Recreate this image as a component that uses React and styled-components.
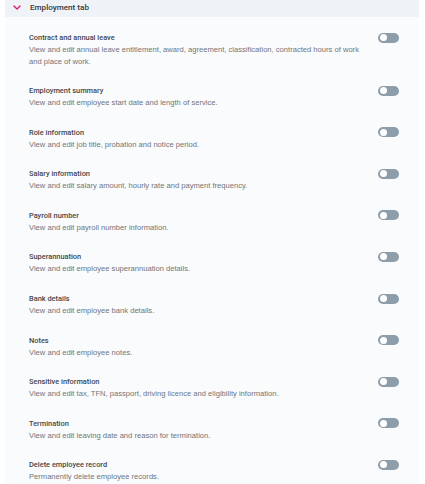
import React from 'react';
import styled, { createGlobalStyle } from 'styled-components';

const GlobalStyle = createGlobalStyle`
  html, body {
    margin: 0;
    padding: 0;
    background: #ffffff;
  }
  body {
    font-family: "Liberation Sans", Arial, sans-serif;
  }
`;

const Panel = styled.div`
  margin: 0 6px 0 5px;
  min-height: 484px;
  background: #f9fbfd;
`;

const TabHeader = styled.div`
  display: flex;
  align-items: center;
  height: 17px;
  padding-left: 8px;
  background: #eff2f6;
  box-sizing: border-box;
  padding-bottom: 3px;
`;

const Chevron = styled.svg`
  width: 8px;
  height: 5px;
  margin-right: 9px;
`;

const TabTitle = styled.span`
  font-family: Roboto, "Liberation Sans", sans-serif;
  font-size: 8.1px;
  font-weight: 500;
  color: #34383e;
`;

const List = styled.div`
  display: flex;
  flex-direction: column;
  padding: 15px 0 0 24px;
`;

const Row = styled.div`
  display: flex;
  align-items: flex-start;
  justify-content: space-between;
  padding-right: 20px;
  margin-bottom: 18.1px;
`;

const Text = styled.div`
  display: flex;
  flex-direction: column;
  max-width: 338px;
`;

const Title = styled.div`
  font-family: Roboto, "Liberation Sans", sans-serif;
  font-size: 7.4px;
  font-weight: 500;
  color: #43464b;
  line-height: 11px;
`;

const Desc = styled.div`
  font-size: 7.6px;
  color: #717479;
  line-height: 11.5px;
  margin-top: 1px;
`;

const Toggle = styled.div`
  flex: none;
  width: 21px;
  height: 10px;
  border-radius: 5px;
  background: ${p => (p.on ? '#d6246e' : '#8d9daa')};
  position: relative;
  margin-top: 0.5px;

  &::after {
    content: '';
    position: absolute;
    top: 1.5px;
    left: ${p => (p.on ? '12px' : '1.5px')};
    width: 7px;
    height: 7px;
    border-radius: 50%;
    background: #ffffff;
  }
`;

const settings = [
  {
    title: 'Contract and annual leave',
    desc: 'View and edit annual leave entitlement, award, agreement, classification, contracted hours of work and place of work.',
  },
  { title: 'Employment summary', desc: 'View and edit employee start date and length of service.' },
  { title: 'Role information', desc: 'View and edit job title, probation and notice period.' },
  { title: 'Salary information', desc: 'View and edit salary amount, hourly rate and payment frequency.' },
  { title: 'Payroll number', desc: 'View and edit payroll number information.' },
  { title: 'Superannuation', desc: 'View and edit employee superannuation details.' },
  { title: 'Bank details', desc: 'View and edit employee bank details.' },
  { title: 'Notes', desc: 'View and edit employee notes.' },
  {
    title: 'Sensitive information',
    desc: 'View and edit tax, TFN, passport, driving licence and eligibility information.',
  },
  { title: 'Termination', desc: 'View and edit leaving date and reason for termination.' },
  { title: 'Delete employee record', desc: 'Permanently delete employee records.' },
];

export default function App() {
  return (
    <>
      <GlobalStyle />
      <Panel>
        <TabHeader>
          <Chevron viewBox="0 0 8 5">
            <path d="M1 1 L4 4 L7 1" fill="none" stroke="#d81b72" strokeWidth="1.4" strokeLinecap="round" strokeLinejoin="round" />
          </Chevron>
          <TabTitle>Employment tab</TabTitle>
        </TabHeader>
        <List>
          {settings.map((s, i) => (
            <Row key={i}>
              <Text>
                <Title>{s.title}</Title>
                <Desc>{s.desc}</Desc>
              </Text>
              <Toggle />
            </Row>
          ))}
        </List>
      </Panel>
    </>
  );
}
